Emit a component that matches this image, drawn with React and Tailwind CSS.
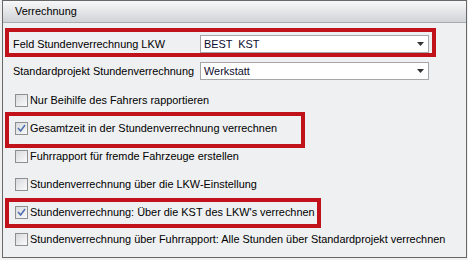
import React from "react";

function Check({ checked }) {
  return (
    <div className="w-[13px] h-[13px] border border-[#8e8f90] bg-gradient-to-br from-[#d8d9dc] to-[#fbfbfc] flex items-center justify-center shrink-0">
      {checked && (
        <svg width="9" height="9" viewBox="0 0 9 9">
          <path d="M1.5 4.6 L3.6 7 L7.6 1.6" fill="none" stroke="#4f6fae" strokeWidth="1.5" strokeLinecap="square" />
        </svg>
      )}
    </div>
  );
}

function Drop({ value }) {
  return (
    <div className="w-[229px] h-[18px] bg-white border border-[#a4a6a8] flex items-center justify-between pl-[3px] pr-[4px]">
      <span className="text-[#0d0d30] whitespace-pre">{value}</span>
      <svg width="7" height="4" viewBox="0 0 7 4">
        <path d="M0 0 H7 L3.5 4 Z" fill="#333" />
      </svg>
    </div>
  );
}

function CheckRow({ checked, label }) {
  return (
    <div className="flex items-center gap-[2px]">
      <Check checked={checked} />
      <span className="whitespace-nowrap">{label}</span>
    </div>
  );
}

export default function App() {
  return (
    <div
      className="w-[468px] h-[260px] bg-[#f0f0f0] text-[10.9px] text-black leading-none"
      style={{ fontFamily: '"Liberation Sans", Arial, sans-serif' }}
    >
      <div className="ml-[2px] w-[465px] h-[258px] border border-[#686868] bg-[#eff0f2] flex flex-col">
        <div className="h-[22px] bg-gradient-to-b from-[#f7f8f9] to-[#d0d3d7] border-b border-[#a9abae] flex items-center pl-[12px] shrink-0">
          <span className="pb-px">Verrechnung</span>
        </div>
        <div className="flex flex-col pl-[2px] pt-[5px]">
          {/* Row 1 */}
          <div className="w-[431px] h-[29px] border-4 border-[#c1121b] pt-[3px] pl-[4px]">
            <div className="flex items-center h-[18px]">
              <span className="w-[187px] whitespace-nowrap">Feld Stundenverrechnung LKW</span>
              <Drop value="BEST  KST" />
            </div>
          </div>
          {/* Row 2 */}
          <div className="h-[28px] pt-[5px] pl-[8px]">
            <div className="flex items-center h-[18px]">
              <span className="w-[187px] whitespace-nowrap">Standardprojekt Stundenverrechnung</span>
              <Drop value="Werkstatt" />
            </div>
          </div>
          {/* Row 3 */}
          <div className="h-[27px] pt-[9px] pl-[10px]">
            <CheckRow label="Nur Beihilfe des Fahrers rapportieren" />
          </div>
          {/* Row 4 */}
          <div className="w-[300px] h-[36px] border-4 border-[#c1121b] pt-[6px] pl-[6px]">
            <CheckRow checked label="Gesamtzeit in der Stundenverrechnung verrechnen" />
          </div>
          {/* Row 5 */}
          <div className="h-[28px] pt-[2px] pl-[10px]">
            <CheckRow label="Fuhrrapport für fremde Fahrzeuge erstellen" />
          </div>
          {/* Row 6 */}
          <div className="h-[22px] pt-[2px] pl-[10px]">
            <CheckRow label="Stundenverrechnung über die LKW-Einstellung" />
          </div>
          {/* Row 7 */}
          <div className="w-[316px] h-[30px] border-4 border-[#c1121b] pt-[4px] pl-[6px]">
            <CheckRow checked label="Stundenverrechnung: Über die KST des LKW's verrechnen" />
          </div>
          {/* Row 8 */}
          <div className="h-[28px] pt-[5px] pl-[10px]">
            <CheckRow label="Stundenverrechnung über Fuhrrapport: Alle Stunden über Standardprojekt verrechnen" />
          </div>
        </div>
      </div>
    </div>
  );
}
